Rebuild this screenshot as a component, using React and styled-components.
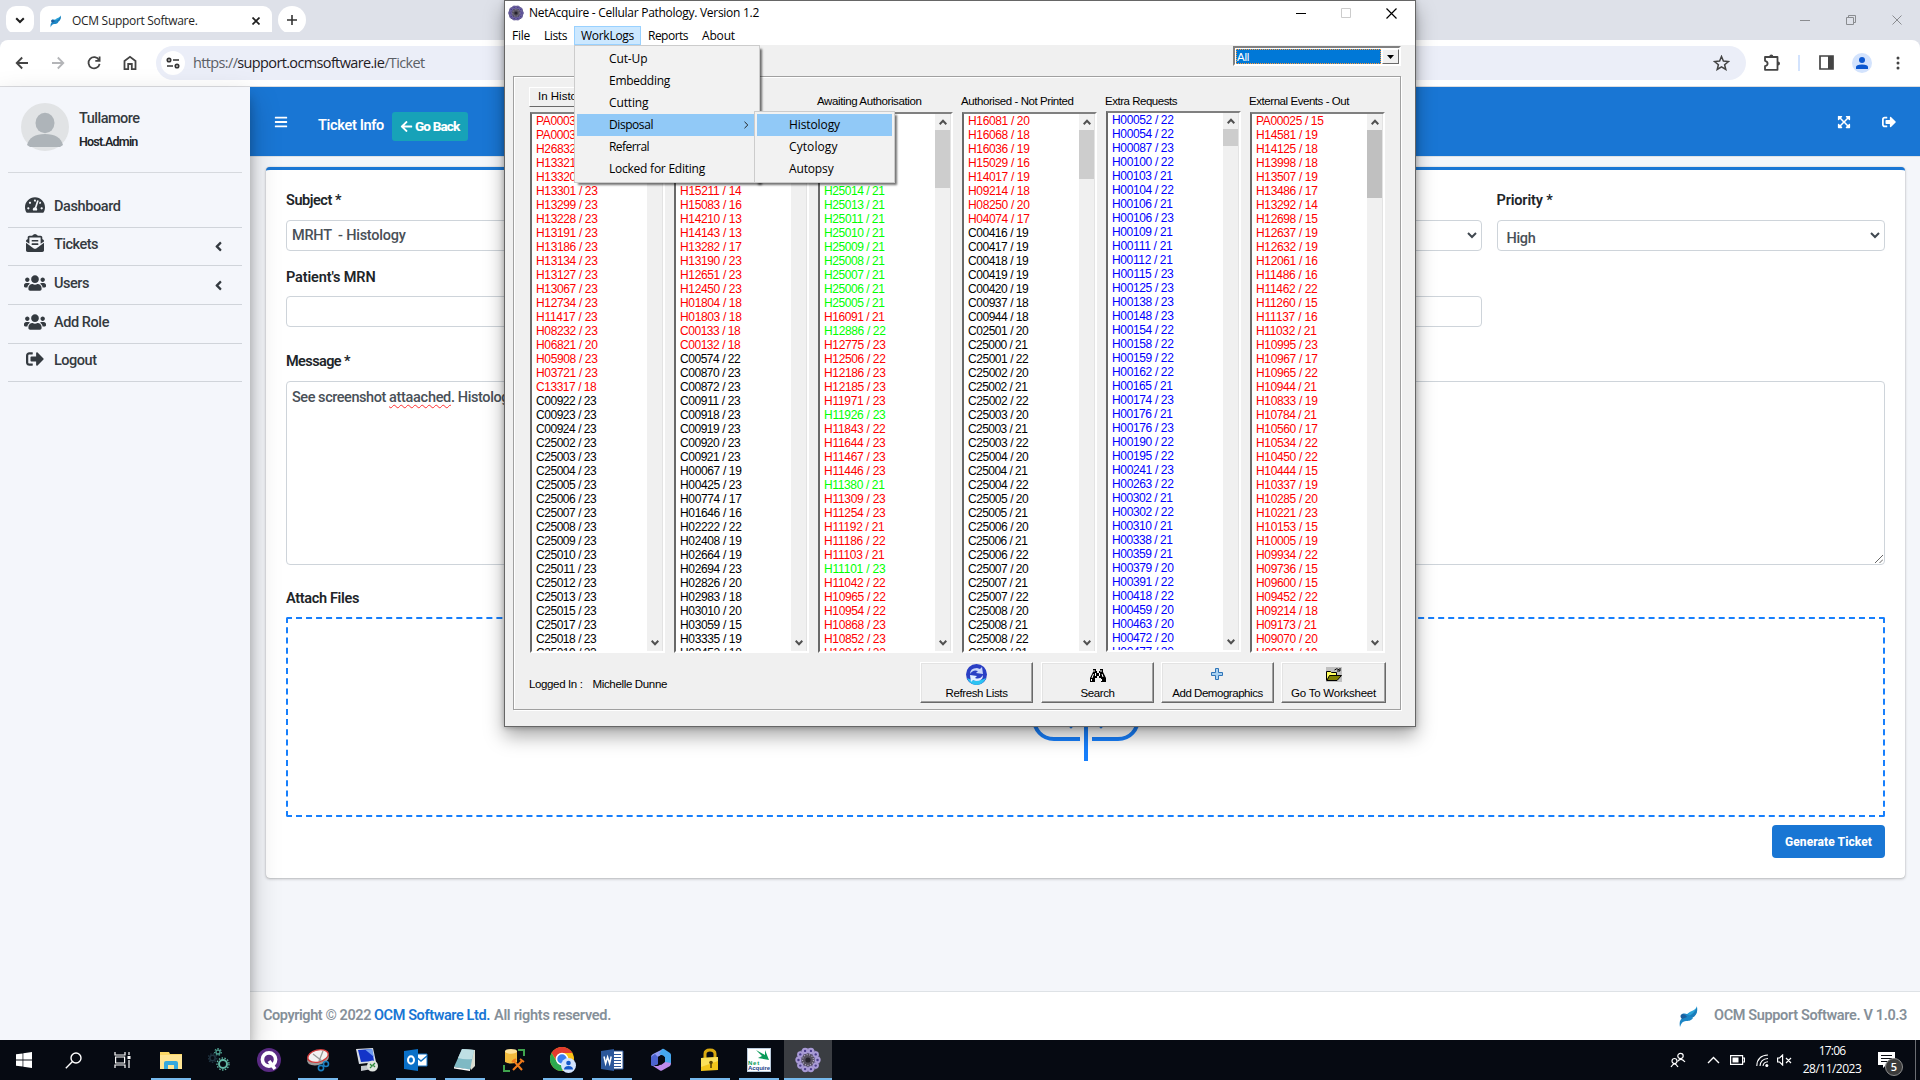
import React, { useLayoutEffect, useRef } from "react";
import styled, { createGlobalStyle, css } from "styled-components";
import {
  FaTachometerAlt,
  FaEnvelopeOpenText,
  FaUsers,
  FaSignOutAlt,
  FaBars,
  FaArrowLeft,
  FaExpandArrowsAlt,
  FaAngleLeft,
} from "react-icons/fa";

const segoe = `"Open Sans", "Noto Sans", sans-serif`;
const web = `"Roboto", "Noto Sans", sans-serif`;
const sans = `"Liberation Sans", Arial, sans-serif`;

const GlobalStyle = createGlobalStyle`
  *, *::before, *::after { box-sizing: border-box; }
  body { margin: 0; overflow: hidden; font-family: ${web}; }
  svg { display: block; flex: none; }
`;

/* Spaces the letters so that a label takes exactly the given width. */
const Label = styled.span`
  display: inline-block;
  white-space: pre;
  flex: none;
`;
function Fit({ w, children, className }) {
  const ref = useRef(null);
  useLayoutEffect(() => {
    const el = ref.current;
    el.style.letterSpacing = "0px";
    const n = el.textContent.length;
    const natural = el.getBoundingClientRect().width;
    el.style.letterSpacing = `${(w - natural) / n}px`;
  }, [w]);
  return (
    <Label ref={ref} className={className}>
      {children}
    </Label>
  );
}

const Desktop = styled.div`
  position: relative;
  width: 1920px;
  height: 1080px;
  display: flex;
  flex-direction: column;
  overflow: hidden;
  background: #fff;
`;

/* ---------- Browser chrome ---------- */
const TabStrip = styled.div`
  height: 40px;
  flex: none;
  background: #dee1e9;
  display: flex;
  align-items: flex-start;
  padding: 6px 15px 0 6px;
`;
const TabButton = styled.div`
  width: 28px;
  height: 28px;
  border-radius: ${(p) => (p.$round ? "14px" : "10px")};
  background: #fff;
  display: grid;
  place-items: center;
`;
const Tab = styled.div`
  height: 34px;
  width: 232px;
  margin: 0 6px;
  border-radius: 9px 9px 0 0;
  background: #fff;
  display: flex;
  align-items: center;
  padding: 0 12px 5px 9px;
  gap: 9px;
  font: 12px/18px ${segoe};
  color: #1f1f1f;
  & > svg:last-child { margin-left: auto; }
`;
const CaptionButtons = styled.div`
  margin-left: auto;
  display: flex;
  gap: 36px;
  padding-top: 9px;
  padding-right: 3px;
`;
const Toolbar = styled.div`
  height: 47px;
  flex: none;
  background: #fff;
  border-bottom: 1px solid #dcdde1;
  border-radius: 8px 8px 0 0;
  box-shadow: 0 -8px 0 #dee1e9;
  display: flex;
  align-items: center;
  padding: 0 14px 1px 14px;
`;
const NavIcons = styled.div`
  display: flex;
  gap: 20px;
  width: 142px;
`;
const AddressBar = styled.div`
  width: 1590px;
  height: 34px;
  border-radius: 17px;
  background: #ebeef8;
  display: flex;
  align-items: center;
  padding: 0 16px 0 5px;
  font: 14.5px/20px ${segoe};
  color: #5b5f66;
  b { font-weight: 400; color: #1f2024; }
  & > svg:last-child { margin-left: auto; }
`;
const SiteInfo = styled.div`
  width: 24px;
  height: 24px;
  border-radius: 50%;
  background: #fff;
  display: grid;
  place-items: center;
  margin-right: 8px;
`;
const ToolIcons = styled.div`
  display: flex;
  align-items: center;
  margin-left: auto;
`;
const Spacer = styled.div`
  width: ${(p) => p.$w || 1}px;
  height: ${(p) => p.$h || 0}px;
  flex: none;
`;
const ToolDivider = styled.div`
  width: 2px;
  height: 16px;
  background: #d3e3fd;
  margin: 0 19px 0 17px;
`;
const Profile = styled.div`
  width: 20px;
  height: 20px;
  border-radius: 50%;
  background: #d3e3fd;
  display: grid;
  place-items: center;
  margin: 0 24px 0 18px;
`;

/* ---------- Web page ---------- */
const Page = styled.div`
  height: 953px;
  display: flex;
  background: #f4f6fa;
`;
const Sidebar = styled.aside`
  position: relative;
  z-index: 1;
  width: 250px;
  flex: none;
  background: #f4f6fb;
  padding: 0 8px;
  box-shadow: 0 14px 28px rgba(0, 0, 0, 0.25), 0 10px 10px rgba(0, 0, 0, 0.22);
  color: #343a40;
`;
const UserPanel = styled.div`
  height: 86px;
  border-bottom: 1px solid #d6d9de;
  display: flex;
  gap: 10px;
  padding: 16px 13px;
`;
const UserText = styled.div`
  display: flex;
  flex-direction: column;
  padding-top: 1px;
  font: 500 14.5px/30px ${web};
  small { font-weight: 600; font-size: 12.5px; line-height: 15px; color: #212529; }
`;
const SideNav = styled.nav`
  padding-top: 16px;
`;
const SideItem = styled.div`
  height: ${(p) => p.$h}px;
  border-bottom: 1px solid #d0d4da;
  display: flex;
  align-items: center;
  padding: 0 16px 3px 15px;
  font: 500 14.5px/20px ${web};
  svg:last-child:not(:first-child) { margin-left: auto; margin-top: 3px; }
`;
const SideIcon = styled.div`
  width: 23px;
  height: 24px;
  margin-right: 8px;
  display: grid;
  place-items: center;
  padding-bottom: 5px;
`;
const Main = styled.main`
  flex: 1;
  display: flex;
  flex-direction: column;
`;
const Header = styled.header`
  height: 70px;
  flex: none;
  background: #1976d4;
  border-bottom: 1px solid #dee2e6;
  display: flex;
  align-items: center;
  padding: 8px 24px 0 24px;
  color: #fff;
  font: 600 14.5px/20px ${web};
  & > svg { margin-bottom: 8px; }
`;
const BackButton = styled.div`
  width: 76px;
  height: 29px;
  margin-left: 8px;
  margin-top: 2px;
  border-radius: 3px;
  background: #17a2b8;
  display: flex;
  align-items: center;
  padding: 0 0 1px 8px;
  gap: 2px;
  font: 800 13.5px/20px ${web};
`;
const Card = styled.section`
  width: 1639px;
  height: 711px;
  margin: 10px 0 0 16px;
  flex: none;
  background: #fff;
  border-top: 3px solid #1976d4;
  border-radius: 4px;
  box-shadow: 0 0 1px rgba(0, 0, 0, 0.25), 0 1px 3px rgba(0, 0, 0, 0.25);
  padding: 20px 20px 0;
  display: flex;
  flex-direction: column;
  color: #212529;
  font: 600 14.5px/20px ${web};
`;
const FormRow = styled.div`
  display: grid;
  grid-template-columns: repeat(4, 1fr);
  gap: 15px;
  height: ${(p) => p.$h}px;
`;
const FieldLabel = styled.div`
  height: ${(p) => p.$h || 30}px;
  padding-top: ${(p) => p.$pt || 1}px;
  line-height: 20px;
`;
const Input = styled.div`
  height: 31px;
  border: 1px solid #ced4da;
  border-radius: 4px;
  background: #fff;
  color: #495057;
  font-weight: 500;
  display: flex;
  align-items: center;
  padding: ${(p) => (p.$select ? "6px 4px 0 9px" : "0 5px")};
  svg { margin-left: auto; margin-bottom: 6px; }
`;
const TextArea = styled.div`
  height: 184px;
  border: 1px solid #ced4da;
  border-radius: 4px;
  color: #495057;
  font-weight: 500;
  padding: 6px 1px 1px 5px;
  display: flex;
  justify-content: space-between;
  & > svg { align-self: flex-end; }
`;
/* Spell-checker squiggle under a misspelt word. */
const Misspelt = styled.span`
  display: inline-block;
  text-decoration: underline wavy #ff3030 1px;
  text-underline-offset: 2px;
  text-decoration-skip-ink: none;
`;
const MisspeltFit = styled(Fit)`
  text-decoration: underline wavy #ff3030 1px;
  text-underline-offset: 2px;
  text-decoration-skip-ink: none;
`;
const DropZone = styled.div`
  height: 200px;
  border: 2px dashed #177ffc;
  border-radius: 2px;
  display: flex;
  justify-content: center;
  padding-top: 62px;
`;
const Submit = styled.div`
  align-self: flex-end;
  margin-top: 8px;
  width: 113px;
  height: 33px;
  border-radius: 4px;
  background: #1976d4;
  color: #fff;
  font: 800 12px/34px ${web};
  text-align: center;
`;
const Footer = styled.footer`
  height: 49px;
  margin-top: auto;
  background: #fff;
  border-top: 1px solid #dee2e6;
  display: flex;
  align-items: center;
  padding: 0 13px 0 13px;
  color: #869099;
  font: 600 14.5px/20px ${web};
  & > svg { margin: 0 13px 0 auto; }
`;
const FooterLink = styled.span`
  color: #1976d4;
  margin: 0 4px 0 3px;
`;

/* ---------- NetAcquire window ---------- */
const Win = styled.div`
  position: absolute;
  z-index: 5;
  left: 504px;
  top: 0;
  width: 912px;
  height: 727px;
  border: 1px solid #666;
  background: #f0f0f0;
  box-shadow: 0 9px 18px rgba(0, 0, 0, 0.34), 0 1px 5px rgba(0, 0, 0, 0.25);
  display: flex;
  flex-direction: column;
  font: 11.5px/14px ${sans};
  color: #000;
`;
const TitleBar = styled.div`
  height: 25px;
  background: #fff;
  display: flex;
  align-items: center;
  padding: 0 18px 1px 3px;
  gap: 5px;
  font: 12px/16px ${segoe};
`;
const TitleButtons = styled.div`
  margin-left: auto;
  display: flex;
  gap: 35px;
`;
const MenuBar = styled.div`
  height: 19px;
  background: #fff;
  display: flex;
  font: 12px/18px ${segoe};
`;
const MenuTitle = styled.div`
  height: 19px;
  padding: 0 6px;
  border: 1px solid transparent;
  ${(p) => p.$open && css`background: #cce8ff; border-color: #99d1ff;`}
`;
const ComboRow = styled.div`
  height: 31px;
  padding: 1px 14px 0 0;
  display: flex;
  justify-content: flex-end;
`;
const Combo = styled.div`
  width: 168px;
  height: 20px;
  border: 2px solid;
  border-color: #808080 #fff #fff #808080;
  background: #fff;
  padding: 1px 0 0 1px;
  display: flex;
  gap: 1px;
`;
const ComboValue = styled.div`
  flex: 1;
  background: #0078d7;
  border: 1px dotted #ff9a3a;
  color: #fff;
  line-height: 14px;
`;
const ComboArrow = styled.div`
  width: 17px;
  background: #f0f0f0;
  border: 1px solid;
  border-color: #fff #696969 #696969 #fff;
  display: grid;
  place-items: center;
`;
const GroupFrame = styled.div`
  margin: 0 14px 0 8px;
  height: 634px;
  border: 1px solid #a0a0a0;
  box-shadow: inset 1px 1px 0 #fff, 1px 1px 0 #fff;
  padding: 10px 14px 0 16px;
`;
const Columns = styled.div`
  display: grid;
  grid-template-columns: repeat(6, 135px);
  column-gap: 9px;
`;
const Column = styled.div`
  margin-top: ${(p) => (p.$up ? -1 : 0)}px;
`;
const ColumnHead = styled.div`
  height: 25px;
  padding-top: ${(p) => (p.$up ? 8 : 7)}px;
  margin-left: -1px;
`;
const HeadButton = styled.div`
  width: 100px;
  height: 20px;
  margin-left: -1px;
  margin-bottom: 5px;
  padding: 1px 8px;
  border: 1px solid;
  border-color: #fff #696969 #696969 #fff;
`;
const ListBox = styled.div`
  height: 541px;
  border: 2px solid;
  border-color: #808080 #fff #fff #696969;
  background: #fff;
  display: flex;
  justify-content: space-between;
  overflow: hidden;
`;
const Rows = styled.div`
  padding-left: 4px;
  overflow: hidden;
  font-size: 12px;
`;
const tones = { r: "#f00", k: "#000", g: "#0f0", b: "#00f" };
const Row = styled.div`
  height: 14px;
  line-height: 14px;
  color: ${(p) => tones[p.$tone]};
`;
const ScrollBar = styled.div`
  width: 16px;
  background: #f0f0f0;
  border-right: 1px solid #e3e3e3;
  display: flex;
  flex-direction: column;
  align-items: center;
  padding: 5px 0 5px;
`;
const Thumb = styled.div`
  width: 15px;
  height: ${(p) => p.$h}px;
  margin: 5px 0 auto;
  background: ${(p) => (p.$dark ? "#c0c0c0" : "#cdcdcd")};
`;
const BottomRow = styled.div`
  margin-top: 9px;
  margin-left: -1px;
  height: 41px;
  display: flex;
  align-items: center;
`;
const LoggedIn = styled.div`
  display: flex;
  gap: 10px;
  padding-top: 3px;
`;
const PushButton = styled.div`
  width: ${(p) => p.$w}px;
  height: 41px;
  margin-left: ${(p) => p.$gap}px;
  border: 1px solid;
  border-color: #fff #696969 #696969 #fff;
  box-shadow: inset -1px -1px 0 #a0a0a0, inset 1px 1px 0 #e3e3e3;
  display: flex;
  flex-direction: column;
  align-items: center;
  justify-content: flex-end;
  padding-bottom: 2px;
`;
const ButtonIcon = styled.div`
  height: 23px;
  display: grid;
  place-items: center;
`;
const Menu = styled.div`
  position: absolute;
  z-index: 2;
  left: ${(p) => p.$x}px;
  top: ${(p) => p.$y}px;
  width: ${(p) => p.$w}px;
  padding: 2px;
  background: #f2f2f2;
  border: 1px solid #ccc;
  box-shadow: 3px 3px 2px -1px rgba(0, 0, 0, 0.55);
  font: 12px/22px ${segoe};
`;
const MenuItem = styled.div`
  height: 22px;
  padding-left: 32px;
  padding-right: 4px;
  display: flex;
  align-items: center;
  justify-content: space-between;
  background: ${(p) => (p.$on ? "#91c9f7" : "transparent")};
`;

/* ---------- Taskbar ---------- */
const Taskbar = styled.div`
  height: 40px;
  flex: none;
  position: relative;
  z-index: 6;
  background: #060a12;
  display: flex;
  color: #fff;
  font: 12px/18px ${segoe};
`;
const TaskCell = styled.div`
  width: 48px;
  height: 40px;
  margin-right: 1px;
  display: flex;
  flex-direction: column;
  align-items: center;
  justify-content: space-between;
  background: ${(p) => (p.$active ? "#3a3d42" : "transparent")};
`;
const TaskIcon = styled.div`
  height: 38px;
  padding-top: 2px;
  display: grid;
  place-items: center;
`;
const Underline = styled.div`
  width: ${(p) => (p.$active ? 48 : 40)}px;
  height: 2px;
  background: #76b9ed;
`;
const Tray = styled.div`
  margin-left: auto;
  display: flex;
  align-items: center;
  border-right: 1px solid #6a6d72;
  margin-right: 4px;
`;
const Clock = styled.div`
  width: 62px;
  display: flex;
  flex-direction: column;
  align-items: center;
  margin: 0 15px 0 9px;
`;
const Notify = styled.div`
  position: relative;
  width: 37px;
`;
const Badge = styled.div`
  position: absolute;
  left: 7px;
  top: 6px;
  width: 18px;
  height: 18px;
  border-radius: 50%;
  background: #3b3b3b;
  border: 1px solid #8c8c8c;
  font: 600 11px/15px ${segoe};
  text-align: center;
`;
const LogoText = styled.div`
  width: 24px;
  height: 24px;
  background: #fff;
  border: 1px solid #bcd;
  display: flex;
  flex-direction: column;
  align-items: flex-start;
  overflow: hidden;
  color: #0a9b58;
  font: 700 6px/5px ${sans};
  svg { margin-left: 8px; }
  em { font-style: normal; color: #1b3f86; font-size: 6px; }
`;

/* ---------- Data ---------- */
/* "-" stands for a row without an entry. */
const make = (tone, text) =>
  text.trim().split(/\s+/).map((t) => ({ tone, text: t === "-" ? "" : t.replace("/", " / ") }));
const lists = [
  {
    title: "In Histology", w: 36, thumb: 40, button: true,
    rows: [
      ...make("r", "PA00031/23 PA00030/23 H26832/23 H13321/23 H13320/23 H13301/23 H13299/23 H13228/23 H13191/23 H13186/23 H13134/23 H13127/23 H13067/23 H12734/23 H11417/23 H08232/23 H06821/20 H05908/23 H03721/23 C13317/18"),
      ...make("k", "C00922/23 C00923/23 C00924/23 C25002/23 C25003/23 C25004/23 C25005/23 C25006/23 C25007/23 C25008/23 C25009/23 C25010/23 C25011/23 C25012/23 C25013/23 C25015/23 C25017/23 C25018/23 C25019/23"),
    ],
  },
  {
    title: "", w: 0, thumb: 40,
    rows: [
      ...make("r", "- - - - - H15211/14 H15083/16 H14210/13 H14143/13 H13282/17 H13190/23 H12651/23 H12450/23 H01804/18 H01803/18 C00133/18 C00132/18"),
      ...make("k", "C00574/22 C00870/23 C00872/23 C00911/23 C00918/23 C00919/23 C00920/23 C00921/23 H00067/19 H00425/23 H00774/17 H01646/16 H02222/22 H02408/19 H02664/19 H02694/23 H02826/20 H02983/18 H03010/20 H03059/15 H03335/19 H03452/18"),
    ],
  },
  {
    title: "Awaiting Authorisation", w: 104.5, thumb: 58,
    rows: [
      ...make("g", "- - - - - H25014/21 H25013/21 H25011/21 H25010/21 H25009/21 H25008/21 H25007/21 H25006/21 H25005/21"),
      ...make("r", "H16091/21"), ...make("g", "H12886/22"),
      ...make("r", "H12775/23 H12506/22 H12186/23 H12185/23 H11971/23"), ...make("g", "H11926/23"),
      ...make("r", "H11843/22 H11644/23 H11467/23 H11446/23"), ...make("g", "H11380/21"),
      ...make("r", "H11309/23 H11254/23 H11192/21 H11186/22 H11103/21"), ...make("g", "H11101/23"),
      ...make("r", "H11042/22 H10965/22 H10954/22 H10868/23 H10852/23 H10842/22"),
    ],
  },
  {
    title: "Authorised - Not Printed", w: 112.5, thumb: 49,
    rows: [
      ...make("r", "H16081/20 H16068/18 H16036/19 H15029/16 H14017/19 H09214/18 H08250/20 H04074/17"),
      ...make("k", "C00416/19 C00417/19 C00418/19 C00419/19 C00420/19 C00937/18 C00944/18 C02501/20 C25000/21 C25001/22 C25002/20 C25002/21 C25002/22 C25003/20 C25003/21 C25003/22 C25004/20 C25004/21 C25004/22 C25005/20 C25005/21 C25006/20 C25006/21 C25006/22 C25007/20 C25007/21 C25007/22 C25008/20 C25008/21 C25008/22 C25009/21"),
    ],
  },
  {
    title: "Extra Requests", w: 72, thumb: 17, up: true,
    rows: make("b", "H00052/22 H00054/22 H00087/23 H00100/22 H00103/21 H00104/22 H00106/21 H00106/23 H00109/21 H00111/21 H00112/21 H00115/23 H00125/23 H00138/23 H00148/23 H00154/22 H00158/22 H00159/22 H00162/22 H00165/21 H00174/23 H00176/21 H00176/23 H00190/22 H00195/22 H00241/23 H00263/22 H00302/21 H00302/22 H00310/21 H00338/21 H00359/21 H00379/20 H00391/22 H00418/22 H00459/20 H00463/20 H00472/20 H00477/20"),
  },
  {
    title: "External Events - Out", w: 100, thumb: 68, dark: true,
    rows: make("r", "PA00025/15 H14581/19 H14125/18 H13998/18 H13507/19 H13486/17 H13292/14 H12698/15 H12637/19 H12632/19 H12061/16 H11486/16 H11462/22 H11260/15 H11137/16 H11032/21 H10995/23 H10967/17 H10965/22 H10944/21 H10833/19 H10784/21 H10560/17 H10534/22 H10450/22 H10444/15 H10337/19 H10285/20 H10221/23 H10153/15 H10005/19 H09934/22 H09736/15 H09600/15 H09452/22 H09214/18 H09173/21 H09070/20 H09011/19"),
  },
];
const rowWidth = (t) =>
  (t[0] === "P" ? 67.5 : t[0] === "C" ? 60.3 : 61.5) - (t.endsWith("1") ? 1 : 0);

/* ---------- Drawings ---------- */
const Svg = ({ w, h = w, vb, children, ...rest }) => (
  <svg width={w} height={h} viewBox={vb || `0 0 ${w} ${h}`} fill="none" {...rest}>
    {children}
  </svg>
);
const Bird = ({ size }) => (
  <Svg w={size} vb="0 0 24 24">
    <path d="M20 0c.5 3-1 5-4 6.500S10 9 9.500 11.500L14 13c4-1 6-4 6-7z" fill="#2ba3d8" />
    <path d="M20 3c1 5-1 9-5 11l-4-2c4-1 7-4 9-9z" fill="#1a7dbb" />
    <path d="M5 10c3-1 6 0 8 2l3 2c-2 3-5 3-7 3-3 0-5 2-6 6-1-5 0-8 4-10z" fill="#1c86c6" />
    <path d="M5 10c2 0 4 1 5 3l-5 2c-2-2-2-4 0-5z" fill="#1b5f9e" />
  </Svg>
);
const Cross = ({ size, color, sw = 1 }) => (
  <Svg w={size} stroke={color} strokeWidth={sw}>
    <path d={`M.5 .5L${size - 0.5} ${size - 0.5}M${size - 0.5} .5L.5 ${size - 0.5}`} />
  </Svg>
);
const ScrollArrow = ({ down }) => (
  <Svg w={8} h={6} stroke="#505050" strokeWidth="2">
    <path d={down ? "M.7 .8L4 4.2L7.3 .8" : "M.7 5.2L4 1.8L7.3 5.2"} />
  </Svg>
);
const SelectArrow = () => (
  <Svg w={10} h={7} stroke="#404850" strokeWidth="2"><path d="M1 1l4 4 4-4" /></Svg>
);
const Rosette = ({ size, back, petal }) => (
  <Svg w={size} vb="0 0 24 24">
    <circle cx="12" cy="12" r="11" fill={back} />
    {Array.from({ length: 10 }, (_, i) => {
      const a = (i * Math.PI) / 5;
      const x = 12 + 8.8 * Math.cos(a);
      const y = 12 + 8.8 * Math.sin(a);
      return (
        <g key={i}>
          <circle cx={x} cy={y} r="2.9" fill={petal} />
          <circle cx={x} cy={y} r="1.1" fill="#4b3d8c" />
        </g>
      );
    })}
    <circle cx="12" cy="12" r="6" fill="#55505f" />
    <circle cx="12" cy="12" r="5" stroke="#bbb3cc" strokeDasharray="1 1.4" />
    <circle cx="12" cy="12" r="2.4" fill="#26232b" />
  </Svg>
);
const Gear = ({ x, y, r, c, sw }) => (
  <g stroke={c} fill="none">
    <circle cx={x} cy={y} r={r} strokeWidth={sw} />
    <circle cx={x} cy={y} r={r + sw} strokeWidth="1.3" strokeDasharray="1.5 1.4" />
  </g>
);
const UploadArt = () => (
  <Svg w={108} h={84} stroke="#177ffc" strokeWidth="4">
    <path d="M48 58H22C10 58 2 49 2 37S12 17 24 16C30 4 42 2 54 2s24 4 30 14c12 1 22 9 22 21s-8 21-20 21H60" />
    <path d="M54 24V80" />
    <path d="M34 40l5 5 5-5M64 40l5 5 5-5" />
  </Svg>
);

const taskIcons = [
  { art: <Svg w={16}><path d="M0 2.3L6.6 1.4V7.6H0zM7.3 1.3L16 0V7.6H7.3zM0 8.4H6.6V14.6L0 13.7zM7.3 8.4H16V16L7.3 14.8z" fill="#fff" /></Svg> },
  { art: <Svg w={17} stroke="#fff" strokeWidth="1.4"><circle cx="11" cy="6" r="5" /><path d="M7.5 9.5L.8 16.2" /></Svg> },
  { art: <Svg w={17} h={16} stroke="#fff" strokeWidth="1.2"><path d="M1 0v3h10V0M1 16v-3h10v3M1.6 5h9v6h-9zM15 0v3M15 8v8" /><path d="M13.5 5.5h3" strokeWidth="3" /></Svg> },
  { run: true, art: <Svg w={22} h={19}><path d="M0 1h9l1 2h12v15H0z" fill="#fbd766" /><path d="M0 4h22v14H0z" fill="#ffe594" /><path d="M4 18v-6q0-2 2-2h10q2 0 2 2v6h-4v-4H8v4z" fill="#35a8dd" /></Svg> },
  { art: <Svg w={24}><Gear x={15} y={16} r={4} c="#63b8a5" sw={2} /><Gear x={10} y={4} r={2} c="#4f9f90" sw={1.3} /><Gear x={4.5} y={10} r={2.7} c="#1f3440" sw={1.6} /></Svg> },
  { art: <Svg w={24}><circle cx="12" cy="12" r="12" fill="#5a2a83" /><circle cx="12" cy="11.5" r="6.6" stroke="#fff" strokeWidth="3.6" /><path d="M12 13l6 8" stroke="#fff" strokeWidth="3.6" /></Svg> },
  { run: true, art: <Svg w={24}><ellipse cx="12" cy="11" rx="11" ry="6" transform="rotate(-14 12 11)" fill="#9a9a9a" /><ellipse cx="12" cy="8" rx="10.5" ry="6" transform="rotate(-14 12 8)" fill="#f2f2f2" stroke="#d33b3b" strokeWidth="1.4" /><path d="M7 6l9 7M17 3l-4 10" stroke="#999" strokeWidth="1.3" /><circle cx="15" cy="20" r="2.6" stroke="#1c7fc0" strokeWidth="1.6" /><circle cx="20" cy="16" r="2.5" stroke="#1c7fc0" strokeWidth="1.6" /></Svg> },
  { art: <Svg w={24}><path d="M1 1l17-1 3 14-17 2z" fill="#d7dce4" /><path d="M3 2l14-1 2 12-13 1z" fill="#1334c8" /><path d="M10 1.5l7-.5 2 8z" fill="#6f9cf0" /><path d="M6 18l9-1 2 4-11 2z" fill="#c2c6cc" /><circle cx="17.5" cy="18" r="5.5" fill="#dfe3df" /><path d="M15 16l2 2-2 2M20 15l-2 2 2 2" stroke="#2e8a3c" strokeWidth="1.3" /></Svg> },
  { run: true, art: <Svg w={24}><path d="M9 6h14v12H9z" fill="#fff" stroke="#1272c4" /><path d="M11 8l6 5 6-5" stroke="#1272c4" strokeWidth="1.5" /><path d="M0 3l14-2v22L0 21z" fill="#0a70c8" /><ellipse cx="7" cy="12" rx="3" ry="3.7" stroke="#fff" strokeWidth="2" /></Svg> },
  { run: true, art: <Svg w={24}><path d="M9 1l13 1v16l-4 4z" fill="#d9dcd0" /><path d="M9 1l12 1-4 20L1 19z" fill="#7fb9c4" /><path d="M9 1l12 1-2 9Q12 12 5 10z" fill="#bfdfe4" /><path d="M1 19l16 2.500v1.500L1 20.500z" fill="#fff" /></Svg> },
  { art: <Svg w={24}><path d="M16 2h6v6M2 17v6h6" stroke="#3fa34d" strokeWidth="2" /><path d="M3 3v11q5 3 12 0V3z" fill="#f2bb3d" /><ellipse cx="9" cy="3.3" rx="6" ry="2.4" fill="#ffe39a" /><path d="M11 12l9 10M20 13l-9 9" stroke="#f07b1c" strokeWidth="2.1" /><path d="M10 14l4-3M18 11l4 3" stroke="#f07b1c" strokeWidth="2" /></Svg> },
  { run: true, art: <Svg w={26}><circle cx="12" cy="12" r="12" fill="#fbc116" /><path d="M1.6 6A12 12 0 0 1 22.4 6H12L7 14z" fill="#e33b2e" /><path d="M1.6 6A12 12 0 0 0 12 24l5-9H7z" fill="#2da94f" /><circle cx="12" cy="12" r="5.5" fill="#3a7df0" stroke="#fff" strokeWidth="1.5" /><circle cx="18.5" cy="18.5" r="7.5" fill="#d3e3fd" /><circle cx="18.5" cy="16" r="2.3" fill="#1457c9" /><path d="M14 22.5q0-3.5 4.5-3.5t4.5 3.5z" fill="#1457c9" /></Svg> },
  { run: true, art: <Svg w={24}><path d="M11 3h12v18H11z" fill="#fff" stroke="#2b579a" /><path d="M14 6.5h7M14 9.5h7M14 12.5h7M14 15.5h7M14 18.5h7" stroke="#2b579a" /><path d="M1 3l13-2v22L1 21z" fill="#2b579a" /><path d="M4 8.5l1.6 7 2-6.5 2 6.5 1.6-7" stroke="#fff" strokeWidth="1.5" /></Svg> },
  { art: <Svg w={22} h={24}><path d="M13 1L3 6Q1 7 1 9v7q0 2 2 2l5-2V9l7-4z" fill="#8f9bf2" /><path d="M12 1q1-.5 2 0l6 4q1 1 1 2v8l-7 1V8L9 6z" fill="#46a7ee" /><path d="M3 18l7 4.500q1 .5 2 0l8-4.500q1-1 1-3l-6-1-7 4z" fill="#bd8cec" /><path d="M1 9v7q0 2 2 2l5-2V9L5 6z" fill="#4c63cf" /><path d="M8 9l3-2 4 2v5l-4 3-3-2z" fill="#060a12" /></Svg> },
  { run: true, art: <Svg w={20} h={24}><path d="M5 11V6q0-4 5-4t5 4v5" stroke="#d9a90f" strokeWidth="3" /><path d="M1 10l17-1v13L1 23z" fill="#f2c51b" /><path d="M1 10l17-1v4L1 19z" fill="#fbe05a" /><circle cx="11" cy="14.5" r="1.8" fill="#5b4300" /><path d="M11 15v5" stroke="#5b4300" strokeWidth="1.6" /></Svg> },
  {
    run: true,
    art: (
      <LogoText>
        <Svg w={14} h={12}><path d="M0 1l9 5V1l4 10L2 9l4-2z" fill="#0a9b58" /></Svg>
        <Fit w={12}>Net</Fit>
        <em><Fit w={22}>Acquire</Fit></em>
      </LogoText>
    ),
  },
  { run: true, active: true, art: <Rosette size={26} back="#6b6390" petal="#a99bd6" /> },
];

/* ---------- Parts ---------- */
function BrowserChrome() {
  return (
    <>
      <TabStrip>
        <TabButton><Svg w={10} h={7} stroke="#1f1f1f" strokeWidth="2"><path d="M1.2 1.2L5 5l3.8-3.8" /></Svg></TabButton>
        <Tab>
          <Bird size={14} />
          <Fit w={125.5}>OCM Support Software.</Fit>
          <Cross size={8} color="#1f1f1f" sw={1.7} />
        </Tab>
        <TabButton $round><Svg w={12} stroke="#333" strokeWidth="1.6"><path d="M6 1v10M1 6h10" /></Svg></TabButton>
        <CaptionButtons>
          <Svg w={10} stroke="#8a8c90"><path d="M0 5.5h10" /></Svg>
          <Svg w={10} stroke="#8a8c90"><path d="M.5 2.5h7v7h-7zM2.5 2V.5h7v7H8" /></Svg>
          <Cross size={10} color="#8a8c90" />
        </CaptionButtons>
      </TabStrip>
      <Toolbar>
        <NavIcons>
          <Svg w={16} stroke="#444" strokeWidth="1.8"><path d="M14 8H3M8.2 2.5L2.7 8l5.5 5.5" /></Svg>
          <Svg w={16} stroke="#b4b5b8" strokeWidth="1.8"><path d="M2 8h11M7.8 2.5L13.3 8l-5.5 5.5" /></Svg>
          <Svg w={16} stroke="#444" strokeWidth="1.8"><path d="M13 5A5.6 5.6 0 1 0 13.6 8.8" /><path d="M13.6 1.5v4.3H9.3" /></Svg>
          <Svg w={16} stroke="#444" strokeWidth="1.8"><path d="M2.5 6L8 1.8 13.5 6v8.2h-3.7V9H6.2v5.2H2.5z" /></Svg>
        </NavIcons>
        <AddressBar>
          <SiteInfo>
            <Svg w={14} h={12} stroke="#333" strokeWidth="1.7"><circle cx="3" cy="3" r="1.7" /><path d="M7 3h6M1 9h6" /><circle cx="11" cy="9" r="1.7" /></Svg>
          </SiteInfo>
          <Fit w={231.5}>https://<b>support.ocmsoftware.ie</b>/Ticket</Fit>
          <Svg w={17} h={16} stroke="#444" strokeWidth="1.5"><path d="M8.5 1.5l1.9 4.6 5 .4-3.8 3.2 1.2 4.8-4.3-2.6-4.3 2.6 1.2-4.8L1.6 6.5l5-.4z" /></Svg>
        </AddressBar>
        <ToolIcons>
          <Svg w={18} stroke="#444" strokeWidth="1.8">
            <path d="M2 3h12.500v12.800H2v-3.700q2.600-.4 2.600-2.600T2 6.800z" strokeLinejoin="round" />
            <path d="M6.300 2.500a2 2 0 0 1 4 0zM15 7.500a2 2 0 0 1 0 4z" fill="#444" stroke="none" />
          </Svg>
          <ToolDivider />
          <Svg w={15}><path d="M1 1h13v13H1z" stroke="#444" strokeWidth="1.7" /><path d="M9 1h5v13H9z" fill="#444" /></Svg>
          <Profile><Svg w={12}><circle cx="6" cy="3" r="3" fill="#0b57d0" /><path d="M0 12V10q0-2.6 6-2.6t6 2.6v2z" fill="#0b57d0" /></Svg></Profile>
          <Svg w={4} h={14}><g fill="#444"><circle cx="2" cy="2" r="1.5" /><circle cx="2" cy="7" r="1.5" /><circle cx="2" cy="12" r="1.5" /></g></Svg>
          <Spacer $w={6} />
        </ToolIcons>
      </Toolbar>
    </>
  );
}

const sideItems = [
  ["Dashboard", 66.5, FaTachometerAlt, 20, 39],
  ["Tickets", 44, FaEnvelopeOpenText, 18, 38, true],
  ["Users", 35, FaUsers, 22, 39, true],
  ["Add Role", 55, FaUsers, 22, 39],
  ["Logout", 42.5, FaSignOutAlt, 18, 38],
];

function WebPage() {
  return (
    <Page>
      <Sidebar>
        <UserPanel>
          <Svg w={48}>
            <circle cx="24" cy="24" r="24" fill="#e1e3e5" />
            <ellipse cx="24" cy="20" rx="9.5" ry="10.2" fill="#aeb4b9" />
            <path d="M6 42q3-11 18-11t18 11l-3 2H9z" fill="#aeb4b9" />
          </Svg>
          <UserText>
            <Fit w={62}>Tullamore</Fit>
            <small><Fit w={58.5}>Host.Admin</Fit></small>
          </UserText>
        </UserPanel>
        <SideNav>
          {sideItems.map(([name, w, Icon, size, h, more]) => (
            <SideItem key={name} $h={h}>
              <SideIcon><Icon size={size} /></SideIcon>
              <Fit w={w}>{name}</Fit>
              {more && <FaAngleLeft size={15} />}
            </SideItem>
          ))}
        </SideNav>
      </Sidebar>
      <Main>
        <Header>
          <FaBars size={14} />
          <Spacer $w={30} />
          <Fit w={66}>Ticket Info</Fit>
          <BackButton><FaArrowLeft size={13} /><Fit w={44.5}>Go Back</Fit></BackButton>
          <Spacer $w={1369} />
          <FaExpandArrowsAlt size={14} />
          <Spacer $w={31} />
          <FaSignOutAlt size={14} />
        </Header>
        <Card>
          <FormRow $h={77}>
            <div><FieldLabel><Fit w={55}>Subject *</Fit></FieldLabel><Input><Fit w={113.5}>MRHT  - Histology</Fit></Input></div>
            <div><FieldLabel /><Input /></div>
            <div><FieldLabel /><Input $select><SelectArrow /></Input></div>
            <div><FieldLabel><Fit w={56}>Priority *</Fit></FieldLabel><Input $select><Fit w={29}>High</Fit><SelectArrow /></Input></div>
          </FormRow>
          <FormRow $h={84}>
            <div><FieldLabel $h={29}><Fit w={89.5}>Patient's MRN</Fit></FieldLabel><Input /></div>
            <div><FieldLabel $h={29} /><Input /></div>
            <div><FieldLabel $h={29} /><Input /></div>
          </FormRow>
          <FieldLabel><Fit w={64}>Message *</Fit></FieldLabel>
          <TextArea>
            <span><Fit w={97}>See screenshot </Fit><MisspeltFit w={62}>attaached</MisspeltFit><Fit w={68}>. Histology </Fit></span>
            <Svg w={8} h={8} stroke="#555" strokeWidth=".9"><path d="M0 8L8 0M4.5 8L8 4.5" /></Svg>
          </TextArea>
          <FieldLabel $h={52} $pt={24}><Fit w={73}>Attach Files</Fit></FieldLabel>
          <DropZone><UploadArt /></DropZone>
          <Submit><Fit w={87}>Generate Ticket</Fit></Submit>
        </Card>
        <Footer>
          <Fit w={108}>Copyright © 2022</Fit>
          <FooterLink><Fit w={116}>OCM Software Ltd.</Fit></FooterLink>
          <Fit w={117}>All rights reserved.</Fit>
          <Bird size={24} />
          <Fit w={193}>OCM Support Software. V 1.0.3</Fit>
        </Footer>
      </Main>
    </Page>
  );
}

function NetAcquire() {
  return (
    <Win>
      <TitleBar>
        <Rosette size={16} back="#4a4370" petal="#6d63a0" />
        <Fit w={230}>NetAcquire - Cellular Pathology. Version 1.2</Fit>
        <TitleButtons>
          <Svg w={10} stroke="#000"><path d="M0 5.5h10" /></Svg>
          <Svg w={10} stroke="#ccc"><path d="M.5 .5h9v9h-9z" /></Svg>
          <Cross size={11} color="#000" sw={1.2} />
        </TitleButtons>
      </TitleBar>
      <MenuBar>
        <MenuTitle><Fit w={18}>File</Fit></MenuTitle>
        <MenuTitle><Fit w={23}>Lists</Fit></MenuTitle>
        <MenuTitle $open><Fit w={53}>WorkLogs</Fit></MenuTitle>
        <MenuTitle><Fit w={40}>Reports</Fit></MenuTitle>
        <MenuTitle><Fit w={33}>About</Fit></MenuTitle>
      </MenuBar>
      <ComboRow>
        <Combo>
          <ComboValue><Fit w={12}>All</Fit></ComboValue>
          <ComboArrow><Svg w={7} h={4}><path d="M0 0h7L3.5 4z" fill="#000" /></Svg></ComboArrow>
        </Combo>
      </ComboRow>
      <GroupFrame>
        <Columns>
          {lists.map((l, i) => (
            <Column key={i} $up={l.up}>
              {l.button ? (
                <HeadButton>{l.title}</HeadButton>
              ) : (
                <ColumnHead $up={l.up}>{l.title && <Fit w={l.w}>{l.title}</Fit>}</ColumnHead>
              )}
              <ListBox>
                <Rows>
                  {l.rows.map((r, j) => (
                    <Row key={j} $tone={r.tone}>{r.text && <Fit w={rowWidth(r.text)}>{r.text}</Fit>}</Row>
                  ))}
                </Rows>
                <ScrollBar>
                  <ScrollArrow />
                  <Thumb $h={l.thumb} $dark={l.dark} />
                  <ScrollArrow down />
                </ScrollBar>
              </ListBox>
            </Column>
          ))}
        </Columns>
        <BottomRow>
          <LoggedIn>
            <Fit w={53.5}>Logged In :</Fit>
            <Fit w={74.5}>Michelle Dunne</Fit>
          </LoggedIn>
          <PushButton $w={113} $gap={253}>
            <ButtonIcon>
              <Svg w={21}>
                <circle cx="10.5" cy="10.5" r="10.5" fill="#2a3fc4" />
                <path d="M1 14q9 5 19 0-3 7-9.500 7T1 14z" fill="#2cc3f2" />
                <path d="M4 10q0-6 7-6l3 1 2-2 1 7-7-1 2-2q-5-2-8 3z" fill="#c9d6fa" />
                <path d="M17 11q0 6-7 6l-3-1-2 2-1-7 7 1-2 2q5 2 8-3z" fill="#e3efff" />
              </Svg>
            </ButtonIcon>
            <Fit w={62}>Refresh Lists</Fit>
          </PushButton>
          <PushButton $w={113} $gap={8}>
            <ButtonIcon>
              <Svg w={16} h={14}>
                <path d="M3 1h3v2h1v2h2V3h1V1h3v3l3 6v4h-5v-4H9V8H7v2H5v4H0v-4l3-6z" fill="#000" />
                <path d="M4 2v2M11 2v2M3.5 6L2 10M9.5 5v3M12 6l1 3M1.5 11v2M11.5 11v2M5.5 5v3" stroke="#fff" />
              </Svg>
            </ButtonIcon>
            <Fit w={34}>Search</Fit>
          </PushButton>
          <PushButton $w={113} $gap={7}>
            <ButtonIcon><Svg w={13}><path d="M4.5 .5h3v4h4v3h-4v4h-3v-4h-4v-3h4z" fill="#a9d2f2" stroke="#2f74b8" /></Svg></ButtonIcon>
            <Fit w={90.5}>Add Demographics</Fit>
          </PushButton>
          <PushButton $w={105} $gap={7}>
            <ButtonIcon>
              <Svg w={16} h={15}>
                <path d="M0 0h16v15H0z" fill="#c0c0c0" />
                <path d="M.5 4.5h4l1 1h5V13H.5z" fill="#ffff60" stroke="#000" />
                <path d="M3.5 8.5h12L11 13.5H.8z" fill="#808000" stroke="#000" />
                <path d="M8.5 3q2-2.5 5 0M14 1v3h-3" stroke="#000" />
              </Svg>
            </ButtonIcon>
            <Fit w={85}>Go To Worksheet</Fit>
          </PushButton>
        </BottomRow>
      </GroupFrame>
      <Menu $x={69} $y={44} $w={186}>
        <MenuItem><Fit w={38.5}>Cut-Up</Fit></MenuItem>
        <MenuItem><Fit w={61}>Embedding</Fit></MenuItem>
        <MenuItem><Fit w={39.5}>Cutting</Fit></MenuItem>
        <MenuItem $on>
          <Fit w={44}>Disposal</Fit>
          <Svg w={9} h={8} stroke="#222"><path d="M.5 .8L3.8 4 .5 7.2" /></Svg>
        </MenuItem>
        <MenuItem><Fit w={40}>Referral</Fit></MenuItem>
        <MenuItem><Fit w={96}>Locked for Editing</Fit></MenuItem>
      </Menu>
      <Menu $x={249} $y={110} $w={141}>
        <MenuItem $on><Fit w={51}>Histology</Fit></MenuItem>
        <MenuItem><Fit w={48.5}>Cytology</Fit></MenuItem>
        <MenuItem><Fit w={44.5}>Autopsy</Fit></MenuItem>
      </Menu>
    </Win>
  );
}

export default function App() {
  return (
    <Desktop>
      <GlobalStyle />
      <BrowserChrome />
      <WebPage />
      <NetAcquire />
      <Taskbar>
        {taskIcons.map((t, i) => (
          <TaskCell key={i} $active={t.active}>
            <TaskIcon>{t.art}</TaskIcon>
            {t.run && <Underline $active={t.active} />}
          </TaskCell>
        ))}
        <Tray>
          <Svg w={16} h={16} stroke="#fff" strokeWidth="1.2"><circle cx="10.5" cy="4" r="2.7" /><path d="M7.5 9.5Q11 5 15 10" /><circle cx="4.5" cy="9" r="2.5" /><path d="M1 15q3.5-6 7 0" /></Svg>
          <Spacer $w={21} />
          <Svg w={13} h={8} stroke="#fff" strokeWidth="1.4"><path d="M1 7l5.5-5.5L12 7" /></Svg>
          <Spacer $w={10} />
          <Svg w={15} h={10}><path d="M.6 .6h12v8.8H.6zM13 3h1.5v4H13" stroke="#fff" strokeWidth="1.2" /><path d="M2.5 2.5h6v5h-6z" fill="#fff" /></Svg>
          <Spacer $w={11} />
          <Svg w={13} h={13} stroke="#fff" strokeWidth="1.1"><path d="M.8 12Q1 1.500 12 1M4 12Q4.5 5 12 4.5M7 12q.5-4 5-4.3" /><circle cx="10.8" cy="11.5" r="1.5" fill="#fff" stroke="none" /></Svg>
          <Spacer $w={8} />
          <Svg w={15} h={12} stroke="#fff" strokeWidth="1.2"><path d="M.6 4h2l3-3v10l-3-3h-2zM9 4l5 5M14 4L9 9" /></Svg>
          <Clock><Fit w={26.5}>17:06</Fit><Fit w={58.5}>28/11/2023</Fit></Clock>
          <Notify>
            <Svg w={17} h={16}><path d="M0 0h17v13H8l-3 3v-3H0z" fill="#fff" /><path d="M3 3.5h11M3 6.5h11M3 9.5h7" stroke="#0a0d14" /></Svg>
            <Badge>5</Badge>
          </Notify>
        </Tray>
      </Taskbar>
    </Desktop>
  );
}
